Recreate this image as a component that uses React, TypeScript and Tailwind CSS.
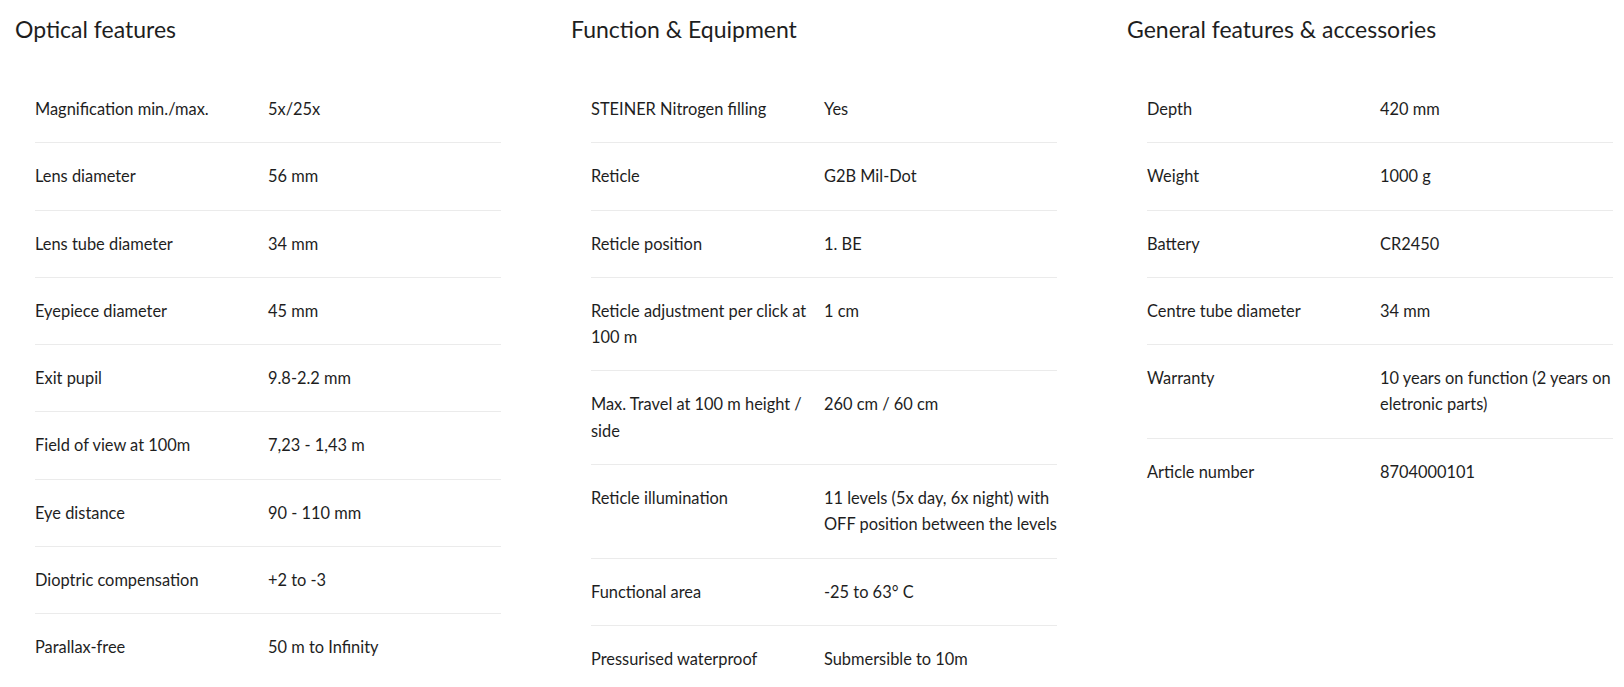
import React from "react";

type Row = [string, string];

const sections: { title: string; rows: Row[] }[] = [
  {
    title: "Optical features",
    rows: [
      ["Magnification min./max.", "5x/25x"],
      ["Lens diameter", "56 mm"],
      ["Lens tube diameter", "34 mm"],
      ["Eyepiece diameter", "45 mm"],
      ["Exit pupil", "9.8-2.2 mm"],
      ["Field of view at 100m", "7,23 - 1,43 m"],
      ["Eye distance", "90 - 110 mm"],
      ["Dioptric compensation", "+2 to -3"],
      ["Parallax-free", "50 m to Infinity"],
    ],
  },
  {
    title: "Function & Equipment",
    rows: [
      ["STEINER Nitrogen filling", "Yes"],
      ["Reticle", "G2B Mil-Dot"],
      ["Reticle position", "1. BE"],
      ["Reticle adjustment per click at 100 m", "1 cm"],
      ["Max. Travel at 100 m height / side", "260 cm / 60 cm"],
      ["Reticle illumination", "11 levels (5x day, 6x night) with OFF position between the levels"],
      ["Functional area", "-25 to 63° C"],
      ["Pressurised waterproof", "Submersible to 10m"],
    ],
  },
  {
    title: "General features & accessories",
    rows: [
      ["Depth", "420 mm"],
      ["Weight", "1000 g"],
      ["Battery", "CR2450"],
      ["Centre tube diameter", "34 mm"],
      ["Warranty", "10 years on function (2 years on eletronic parts)"],
      ["Article number", "8704000101"],
    ],
  },
];

export default function App() {
  return (
    <div
      className="w-[1624px] h-[687px] overflow-hidden bg-white text-[#1e1e1e] pl-[15px]"
      style={{ fontFamily: "Lato, 'Open Sans', sans-serif" }}
    >
      <div className="flex gap-[15px]">
        {sections.map((s) => (
          <div key={s.title} className="w-[541px] shrink-0">
            <h2 className="text-[23px] leading-[38px] pt-[10px] font-normal">{s.title}</h2>
            <div className="ml-5 w-[466px] mt-[28px]">
              {s.rows.map(([k, v], i) => (
                <div
                  key={k}
                  className={
                    "grid grid-cols-2 py-5 text-[16.4px] leading-[26.3px] " +
                    (i < s.rows.length - 1 ? "border-b border-[#ebebeb]" : "")
                  }
                >
                  <div className="pr-2">{k}</div>
                  <div>{v}</div>
                </div>
              ))}
            </div>
          </div>
        ))}
      </div>
    </div>
  );
}
